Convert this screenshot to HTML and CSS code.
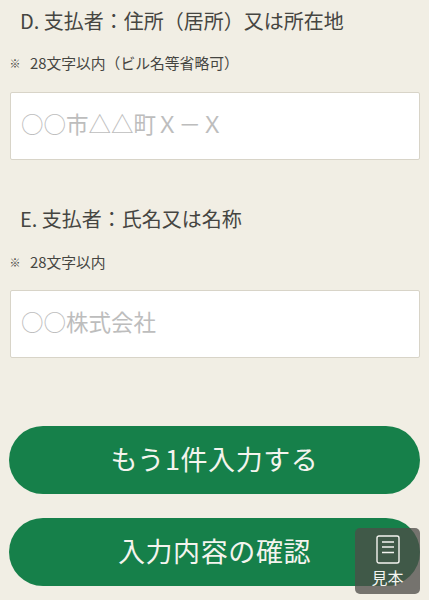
FILE: index.html
```html
<!DOCTYPE html>
<html lang="ja">
<head>
<meta charset="utf-8">
<title>支払者入力</title>
<link rel="stylesheet" href="styles.css">
</head>
<body>
<main class="page">
  <section class="field field-d">
    <h2 class="label">D. 支払者：住所（居所）又は所在地</h2>
    <p class="note"><span class="mark">※</span>28文字以内（ビル名等省略可）</p>
    <div class="box"><span class="ph">○○市△△町Ｘ－Ｘ</span></div>
  </section>
  <section class="field field-e">
    <h2 class="label">E. 支払者：氏名又は名称</h2>
    <p class="note"><span class="mark">※</span>28文字以内</p>
    <div class="box"><span class="ph">○○株式会社</span></div>
  </section>
  <div class="actions">
    <button class="btn">もう1件入力する</button>
    <button class="btn">入力内容の確認</button>
  </div>
</main>
<aside class="sample">
  <svg class="sample-icon" width="24" height="29" viewBox="0 0 24 29" aria-hidden="true">
    <rect x="1" y="1" width="22" height="27" rx="2" fill="none" stroke="#f4f4f0" stroke-width="1.4"/>
    <path d="M6 7H18M6 12H18M6 17.500H18" stroke="#f4f4f0" stroke-width="1.4" fill="none"/>
  </svg>
  <span class="sample-text">見本</span>
</aside>
</body>
</html>
```
FILE: styles.css
```css
html, body {
  margin: 0;
  padding: 0;
  height: 600px;
  overflow: hidden;
  background: #f1eee4;
  font-family: "Noto Sans CJK JP", "Roboto", sans-serif;
  color: #454541;
}
.page {
  display: flex;
  flex-direction: column;
  padding: 7px 9px 0 9.500px;
}
.label {
  margin: 0 0 0 10.500px;
  font-size: 20px;
  font-weight: 400;
  line-height: 28px;
}
.note {
  margin: 18px 0 0;
  font-size: 14.800px;
  line-height: 20px;
  display: flex;
}
.mark {
  width: 20.500px;
  font-size: 11px;
  font-weight: 700;
}
.box {
  margin-top: 19px;
  height: 68px;
  box-sizing: border-box;
  background: #fff;
  border: 1px solid #d8d4c8;
  border-radius: 2px;
  display: flex;
  align-items: center;
  padding: 0 0 6px 10.500px;
}
.ph {
  font-size: 22.500px;
  color: #bdbdbd;
}
.field-e {
  margin-top: 45px;
}
.field-e .note {
  margin-top: 19px;
}
.field-e .box {
  margin-top: 18px;
}
.actions {
  margin: 68px 0 0 -0.500px;
  display: flex;
  flex-direction: column;
  gap: 24px;
}
.btn {
  height: 68px;
  border: none;
  border-radius: 34px;
  background: #16804a;
  color: #f4f4ee;
  font-family: inherit;
  font-size: 27px;
  letter-spacing: 0.6px;
  padding: 0 0 3px;
}
.sample {
  position: absolute;
  left: 355px;
  top: 528px;
  width: 65px;
  height: 66px;
  box-sizing: border-box;
  border-radius: 5px;
  background: rgba(78, 76, 72, 0.76);
  display: flex;
  flex-direction: column;
  align-items: center;
  padding-top: 7px;
  color: #f4f4f0;
}
.sample-text {
  font-size: 16px;
  line-height: 20px;
  margin-top: 3px;
}
```
